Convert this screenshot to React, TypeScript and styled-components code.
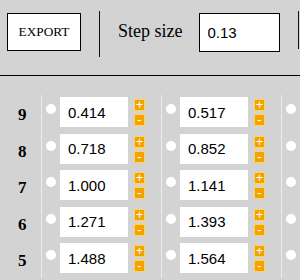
import React, { FC } from 'react';
import styled, { createGlobalStyle } from 'styled-components';

const GlobalStyle = createGlobalStyle`
  html, body {
    margin: 0;
    padding: 0;
    background: #d3d3d3;
  }
  #root {
    width: 300px;
    height: 280px;
    overflow: hidden;
  }
`;

const Page = styled.div`
  width: 300px;
  height: 280px;
  overflow: hidden;
  background: #d3d3d3;
`;

const Toolbar = styled.div`
  display: flex;
  align-items: flex-start;
  height: 76px;
  border-bottom: 1px solid #000;
  box-sizing: border-box;
  white-space: nowrap;
`;

const ExportButton = styled.button`
  margin: 13px 0 0 7px;
  width: 74px;
  height: 38px;
  flex: none;
  padding: 0;
  background: #fff;
  border: 1px solid #000;
  border-radius: 0;
  font-family: 'Liberation Serif', 'Times New Roman', serif;
  font-size: 13.3px;
  color: #000;
`;

const Divider = styled.div<{ $top: number; $height: number }>`
  flex: none;
  width: 1px;
  margin: ${(p) => p.$top}px 0 0 18px;
  height: ${(p) => p.$height}px;
  background: #111;
`;

const StepLabel = styled.span`
  flex: none;
  margin: 22px 0 0 18px;
  font-family: 'Liberation Serif', 'Times New Roman', serif;
  font-size: 18px;
  line-height: 18px;
  color: #000;
`;

const StepInput = styled.input`
  flex: none;
  margin: 13px 0 0 16px;
  width: 81px;
  height: 39px;
  box-sizing: border-box;
  padding: 0 0 0 8px;
  border: 1px solid #000;
  border-radius: 0;
  background: #fff;
  font-family: 'Liberation Sans', Arial, sans-serif;
  font-size: 15px;
  color: #000;
  outline: none;
`;

const Grid = styled.div`
  display: grid;
  grid-template-columns: 41px 120px 120px 120px;
  grid-auto-rows: 36.5px;
  padding-top: 19px;
`;

const RowLabel = styled.div`
  padding: 11px 0 0 18px;
  font-family: 'Liberation Serif', 'Times New Roman', serif;
  font-weight: bold;
  font-size: 17px;
  line-height: 17px;
  color: #000;
`;

const Cell = styled.div`
  display: flex;
  align-items: flex-start;
  border-left: 1px solid #ececec;
  padding-top: 2px;
`;

const Radio = styled.span`
  flex: none;
  width: 10px;
  height: 10px;
  margin: 7px 0 0 4px;
  border-radius: 50%;
  background: #fff;
`;

const ValueInput = styled.input`
  flex: none;
  width: 68px;
  height: 30px;
  margin-left: 4px;
  box-sizing: border-box;
  padding: 0 0 0 8px;
  border: none;
  border-radius: 0;
  background: #fff;
  font-family: 'Liberation Sans', Arial, sans-serif;
  font-size: 15px;
  color: #000;
  outline: none;
`;

const Stepper = styled.div`
  flex: none;
  display: flex;
  flex-direction: column;
  gap: 3px;
  margin: 2px 0 0 6px;
`;

const StepButton = styled.span`
  display: flex;
  align-items: center;
  justify-content: center;
  width: 11px;
  height: 12px;
  box-sizing: border-box;
  background: #f4a200;
  border: 1px solid #ffd45a;
  color: #fff;
  font-family: 'Liberation Sans', Arial, sans-serif;
  font-size: 13px;
  line-height: 12px;
`;

const rows: { label: number; values: string[] }[] = [
  { label: 9, values: ['0.414', '0.517', ''] },
  { label: 8, values: ['0.718', '0.852', ''] },
  { label: 7, values: ['1.000', '1.141', ''] },
  { label: 6, values: ['1.271', '1.393', ''] },
  { label: 5, values: ['1.488', '1.564', ''] },
];

// the third column runs off the right edge, only its radio shows
const VISIBLE_STEPPERS = 2;

const App: FC = function App() {
  return (
    <Page>
      <GlobalStyle />
      <Toolbar>
        <ExportButton>EXPORT</ExportButton>
        <Divider $top={11} $height={46} />
        <StepLabel>Step size</StepLabel>
        <StepInput defaultValue="0.13" />
        <Divider $top={11} $height={38} />
      </Toolbar>
      <Grid>
        {rows.map((row) => (
          <React.Fragment key={row.label}>
            <RowLabel>{row.label}</RowLabel>
            {row.values.map((v, i) => (
              <Cell key={i}>
                <Radio />
                <ValueInput defaultValue={v} />
                {i < VISIBLE_STEPPERS && (
                  <Stepper>
                    <StepButton>+</StepButton>
                    <StepButton>-</StepButton>
                  </Stepper>
                )}
              </Cell>
            ))}
          </React.Fragment>
        ))}
      </Grid>
    </Page>
  );
};

export default App;
